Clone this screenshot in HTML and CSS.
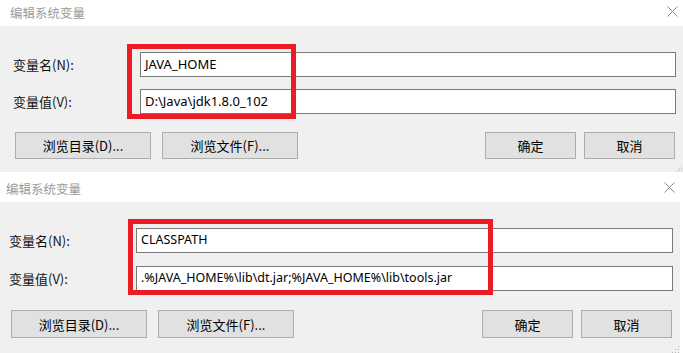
FILE: index.html
```html
<!DOCTYPE html>
<html lang="zh-CN">
<head>
    <meta charset="UTF-8">
    <meta name="viewport" content="width=device-width, initial-scale=1.0">
    <title>编辑系统变量</title>
    <link rel="stylesheet" href="styles.css">
</head>
<body>
    <div class="dialog dialog-home">
        <div class="titlebar">
            <span class="title">编辑系统变量</span>
            <svg class="close" width="11" height="11" viewBox="0 0 11 11">
                <path d="M0.5 0.5 L10.5 10.5 M10.5 0.5 L0.5 10.5" stroke="#8a8a8a" stroke-width="1" fill="none"/>
            </svg>
        </div>
        <div class="panel">
            <div class="field">
                <label>变量名(N):</label>
                <div class="input">JAVA_HOME</div>
            </div>
            <div class="field">
                <label>变量值(V):</label>
                <div class="input">D:\Java\jdk1.8.0_102</div>
            </div>
            <div class="actions">
                <button class="btn-wide">浏览目录(D)...</button>
                <button class="btn-wide">浏览文件(F)...</button>
                <span class="spacer"></span>
                <button class="btn">确定</button>
                <button class="btn">取消</button>
            </div>
        </div>
        <div class="highlight highlight-home"></div>
        <svg class="grip" width="6" height="6" viewBox="0 0 6 6">
            <rect x="4" y="0" width="1" height="1" fill="#b8b8b8"/>
            <rect x="2" y="2" width="1" height="1" fill="#b8b8b8"/>
            <rect x="4" y="2" width="1" height="1" fill="#b8b8b8"/>
            <rect x="0" y="4" width="1" height="1" fill="#b8b8b8"/>
            <rect x="2" y="4" width="1" height="1" fill="#b8b8b8"/>
            <rect x="4" y="4" width="1" height="1" fill="#b8b8b8"/>
        </svg>
    </div>

    <div class="dialog dialog-classpath">
        <div class="titlebar">
            <span class="title">编辑系统变量</span>
            <svg class="close" width="11" height="11" viewBox="0 0 11 11">
                <path d="M0.5 0.5 L10.5 10.5 M10.5 0.5 L0.5 10.5" stroke="#8a8a8a" stroke-width="1" fill="none"/>
            </svg>
        </div>
        <div class="panel">
            <div class="field">
                <label>变量名(N):</label>
                <div class="input">CLASSPATH</div>
            </div>
            <div class="field">
                <label>变量值(V):</label>
                <div class="input">.%JAVA_HOME%\lib\dt.jar;%JAVA_HOME%\lib\tools.jar</div>
            </div>
            <div class="actions">
                <button class="btn-wide">浏览目录(D)...</button>
                <button class="btn-wide">浏览文件(F)...</button>
                <span class="spacer"></span>
                <button class="btn">确定</button>
                <button class="btn">取消</button>
            </div>
        </div>
        <div class="highlight highlight-classpath"></div>
        <svg class="grip" width="9" height="9" viewBox="0 0 9 9">
            <rect x="7" y="1" width="1" height="1" fill="#b8b8b8"/>
            <rect x="4" y="4" width="1" height="1" fill="#b8b8b8"/>
            <rect x="7" y="4" width="1" height="1" fill="#b8b8b8"/>
            <rect x="1" y="7" width="1" height="1" fill="#b8b8b8"/>
            <rect x="4" y="7" width="1" height="1" fill="#b8b8b8"/>
            <rect x="7" y="7" width="1" height="1" fill="#b8b8b8"/>
        </svg>
    </div>
</body>
</html>
```

FILE: styles.css
```css
body {
    margin: 0;
    padding: 0;
    width: 683px;
    height: 353px;
    overflow: hidden;
    background-color: #fff;
    font-family: "Noto Sans", "Noto Sans CJK SC", sans-serif;
    font-size: 13px;
    color: #000;
}
.dialog {
    position: relative;
    width: 683px;
}
.dialog-classpath {
    margin-top: 4px;
    margin-left: -4px;
    width: 684px;
}
.titlebar {
    height: 26px;
    display: flex;
    align-items: center;
    justify-content: space-between;
    padding: 0 5px 0 10px;
    box-sizing: border-box;
}
.title {
    font-family: "Noto Sans CJK SC", sans-serif;
    font-size: 12.5px;
    color: #9a9a9a;
    margin-top: -2px;
}
.close {
    margin-top: -4px;
}
.panel {
    background-color: #f0f0f0;
    padding: 26px 7px 13px 13px;
    display: flex;
    flex-direction: column;
    gap: 12px;
}
.dialog-classpath .panel {
    gap: 13px;
    padding-bottom: 16px;
}
.field {
    display: flex;
    align-items: center;
    height: 25px;
}
.field label {
    width: 127px;
    flex: none;
    font-family: "Noto Sans CJK SC", sans-serif;
    font-size: 13px;
    color: #111;
}
.input {
    flex: 1;
    height: 25px;
    box-sizing: border-box;
    border: 1px solid #7a7a7a;
    background: #fff;
    padding-left: 4px;
    line-height: 22px;
    font-family: "Noto Sans", sans-serif;
    font-size: 13px;
    color: #000;
    white-space: nowrap;
    overflow: hidden;
}
.dialog-classpath .input {
    font-size: 12.5px;
}
.actions {
    display: flex;
    margin-top: 6px;
    padding-left: 2px;
    padding-right: 1px;
}
.actions button {
    height: 27px;
    border: 1px solid #adadad;
    background-color: #e1e1e1;
    font-family: "Noto Sans CJK SC", sans-serif;
    font-size: 13px;
    color: #000;
    padding: 0;
    margin: 0;
}
.dialog-classpath .actions button {
    height: 28px;
}
.btn-wide {
    width: 136px;
    margin-right: 11px !important;
}
.btn {
    width: 91px;
    margin-left: 8px !important;
}
.spacer {
    flex: 1;
}
.highlight {
    position: absolute;
    border: 5px solid #ec1c24;
    box-sizing: border-box;
}
.highlight-home {
    left: 127px;
    top: 44px;
    width: 169px;
    height: 75px;
}
.highlight-classpath {
    left: 132px;
    top: 43px;
    width: 365px;
    height: 76px;
}
.grip {
    position: absolute;
    right: 0;
    bottom: 0;
}
```
